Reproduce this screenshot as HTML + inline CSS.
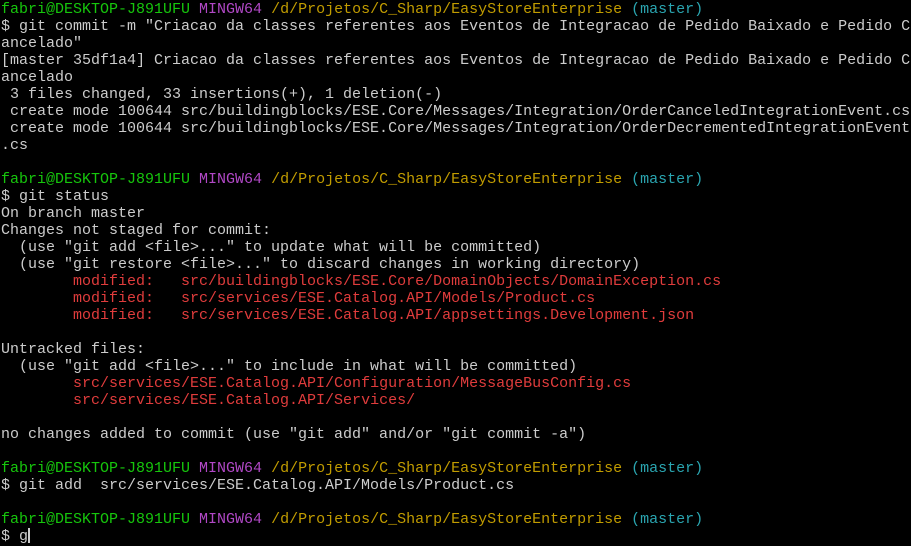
<!DOCTYPE html>
<html><head><meta charset="utf-8"><style>
html,body{margin:0;padding:0;background:#000;width:911px;height:546px;overflow:hidden}
.t{font-family:"Liberation Mono",monospace;font-size:15px;line-height:17px;color:#cccccc;white-space:pre;padding:1px 0 0 1px;letter-spacing:0}
.g{color:#16c60c}.m{color:#b148c6}.y{color:#c19c00}.c{color:#2aa5b0}.r{color:#e03c3c}
.cur{display:inline-block;width:2px;height:15px;background:#ccc;vertical-align:-3px}
</style></head><body><div class="t"><span class="g">fabri@DESKTOP-J891UFU</span> <span class="m">MINGW64</span> <span class="y">/d/Projetos/C_Sharp/EasyStoreEnterprise</span> <span class="c">(master)</span>
$ git commit -m "Criacao da classes referentes aos Eventos de Integracao de Pedido Baixado e Pedido C
ancelado"
[master 35df1a4] Criacao da classes referentes aos Eventos de Integracao de Pedido Baixado e Pedido C
ancelado
 3 files changed, 33 insertions(+), 1 deletion(-)
 create mode 100644 src/buildingblocks/ESE.Core/Messages/Integration/OrderCanceledIntegrationEvent.cs
 create mode 100644 src/buildingblocks/ESE.Core/Messages/Integration/OrderDecrementedIntegrationEvent
.cs

<span class="g">fabri@DESKTOP-J891UFU</span> <span class="m">MINGW64</span> <span class="y">/d/Projetos/C_Sharp/EasyStoreEnterprise</span> <span class="c">(master)</span>
$ git status
On branch master
Changes not staged for commit:
  (use "git add &lt;file&gt;..." to update what will be committed)
  (use "git restore &lt;file&gt;..." to discard changes in working directory)
        <span class="r">modified:   src/buildingblocks/ESE.Core/DomainObjects/DomainException.cs</span>
        <span class="r">modified:   src/services/ESE.Catalog.API/Models/Product.cs</span>
        <span class="r">modified:   src/services/ESE.Catalog.API/appsettings.Development.json</span>

Untracked files:
  (use "git add &lt;file&gt;..." to include in what will be committed)
        <span class="r">src/services/ESE.Catalog.API/Configuration/MessageBusConfig.cs</span>
        <span class="r">src/services/ESE.Catalog.API/Services/</span>

no changes added to commit (use "git add" and/or "git commit -a")

<span class="g">fabri@DESKTOP-J891UFU</span> <span class="m">MINGW64</span> <span class="y">/d/Projetos/C_Sharp/EasyStoreEnterprise</span> <span class="c">(master)</span>
$ git add  src/services/ESE.Catalog.API/Models/Product.cs

<span class="g">fabri@DESKTOP-J891UFU</span> <span class="m">MINGW64</span> <span class="y">/d/Projetos/C_Sharp/EasyStoreEnterprise</span> <span class="c">(master)</span>
$ g<span class="cur"></span></div></body></html>
